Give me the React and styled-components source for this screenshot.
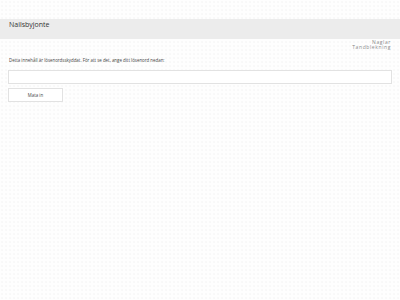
import styled, { createGlobalStyle } from 'styled-components';

const GlobalStyle = createGlobalStyle`
  html, body {
    margin: 0;
    padding: 0;
  }
  body {
    background-color: #fefefe;
    background-image: radial-gradient(circle, #f3f3f3 0.6px, transparent 0.8px);
    background-size: 4px 4px;
    font-family: "Open Sans", "Liberation Sans", sans-serif;
    color: #333;
    width: 400px;
    height: 300px;
    overflow: hidden;
  }
`;

const Page = styled.div`
  display: flex;
  flex-direction: column;
  padding-top: 19px;
`;

const Header = styled.header`
  display: flex;
  align-items: flex-start;
  height: 20px;
  padding: 0 9px;
  background-color: #ececec;
`;

const SiteTitle = styled.h1`
  margin: 0;
  padding-top: 1px;
  font-size: 7px;
  line-height: 9px;
  font-weight: 400;
  color: #333;
`;

const Nav = styled.nav`
  display: flex;
  flex-direction: column;
  align-items: flex-end;
  padding: 1px 9px 0 0;
`;

const NavLink = styled.a`
  font-size: 5px;
  line-height: 5px;
  letter-spacing: 0.6px;
  color: #8a8a8a;
  text-decoration: none;
`;

const Content = styled.main`
  display: flex;
  flex-direction: column;
  align-items: flex-start;
  gap: 4px;
  padding: 6px 8px 0;
`;

const Notice = styled.p`
  margin: 0 0 2px 1px;
  font-size: 4.4px;
  line-height: 8px;
  color: #444;
`;

const PasswordInput = styled.input`
  box-sizing: border-box;
  width: 100%;
  height: 14px;
  border: 1px solid #e2e2e2;
  background: #fff;
  outline: none;
`;

const SubmitButton = styled.button`
  box-sizing: border-box;
  width: 55px;
  height: 14px;
  padding: 0;
  border: 1px solid #e2e2e2;
  background: #fff;
  font-family: inherit;
  font-size: 4.4px;
  color: #444;
`;

export default function App() {
  return (
    <>
      <GlobalStyle />
      <Page>
        <Header>
          <SiteTitle>Nailsbyjonte</SiteTitle>
        </Header>
        <Nav>
          <NavLink href="#">Naglar</NavLink>
          <NavLink href="#">Tandblekning</NavLink>
        </Nav>
        <Content>
          <Notice>Detta innehåll är lösenordsskyddat. För att se det, ange ditt lösenord nedan:</Notice>
          <PasswordInput type="password" />
          <SubmitButton>Mata in</SubmitButton>
        </Content>
      </Page>
    </>
  );
}
